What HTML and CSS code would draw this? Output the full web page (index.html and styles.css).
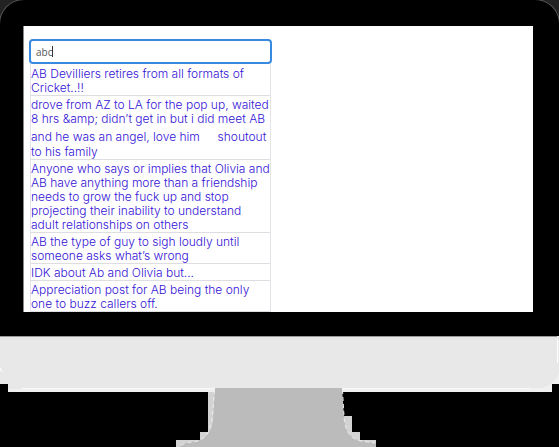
FILE: index.html
```
<!DOCTYPE html>
<html lang="en">
<head>
<meta charset="utf-8">
<title>Search</title>
<link rel="stylesheet" href="styles.css">
</head>
<body>
<div class="monitor">
  <div class="bezel">
    <main class="screen">
      <div class="search">
        <input class="field" type="text" value="abc" aria-label="Search">
        <span class="caret"></span>
      </div>
      <ul class="results">
        <li><a href="#">AB Devilliers retires from all formats of Cricket..!!</a></li>
        <li><a href="#">drove from AZ to LA for the pop up, waited 8 hrs &amp;amp; didn’t get in but i did meet AB and he was an angel, love him <span class="emoji"></span> shoutout to his family</a></li>
        <li><a href="#">Anyone who says or implies that Olivia and AB have anything more than a friendship needs to grow the fuck up and stop projecting their inability to understand adult relationships on others</a></li>
        <li><a href="#">AB the type of guy to sigh loudly until someone asks what’s wrong</a></li>
        <li><a href="#">IDK about Ab and Olivia but...</a></li>
        <li><a href="#">Appreciation post for AB being the only one to buzz callers off.</a></li>
      </ul>
    </main>
  </div>
  <svg class="base" viewBox="0 0 559 111" aria-hidden="true">
    <path fill="#e8e8e8" d="M0 0H559V48H552V56H8V48H0Z"/>
    <path fill="#f0f0f0" d="M552 48H559V38L556 43L550 49L542 52H22V53H8V56H552Z"/>
    <path fill="#fafafa" d="M22 52H215V53H22ZM342 52H530V53H342Z"/>
    <path fill="#999" d="M0 0H557V1H0Z"/>
    <path fill="none" stroke="#fff" d="M557.500 3V27M0 32L2 36"/>
    <path fill="#d3d3d3" d="M208 56H215V111H176V104H200V96H208ZM343 80H352V96H360V104H376V111H343Z"/>
    <path fill="#bbb" d="M215 52H342L344 80Q345 102 361 105L376 107V111H180Q181 107 190 106Q211 105 213 84Z"/>
    <path fill="none" stroke="#eee" stroke-dasharray="4 3" d="M214.500 54L212 84Q209 104 193 106Q182 107 180 111M342.500 54L344 80Q345 102 361 105L375 107"/>
  </svg>
</div>
</body>
</html>
```
FILE: styles.css
```
* {
  box-sizing: border-box;
}

body {
  margin: 0;
  background: #000;
  font-family: Inter, "Liberation Sans", sans-serif;
}

.monitor {
  overflow: hidden;
}

.bezel {
  padding: 26px 26px 24px 23px;
  background: #000;
  border-radius: 24px 24px 0 0;
  box-shadow: 0 0 0 1px #555, 0 0 0 24px #222;
}

.screen {
  padding: 13px 5px 0;
  background: #fff;
  border: solid #888;
  border-width: 0 0 0 1px;
}

.search {
  position: relative;
  width: 50%;
  max-width: 243px;
}

.field {
  display: block;
  width: 100%;
  height: 25px;
  padding: 0 5px;
  border: 2px solid #3889e0;
  border-radius: 4px;
  background: #fff;
  color: #555;
  font: 10px "Open Sans", sans-serif;
  outline: 0;
}

.caret {
  position: absolute;
  left: 23px;
  top: 7px;
  width: 1px;
  height: 11px;
  background: #333;
}

.results {
  width: 50%;
  max-width: 241px;
  margin: 0 0 0 1px;
  padding: 1px 0 0;
  border: solid #e4e4e8;
  border-width: 0 1px;
  list-style: none;
  font-size: 12px;
  font-weight: 300;
  line-height: 14px;
}

.results li {
  padding: 2px 0 0;
  border-bottom: 1px solid #dedee2;
}

.results a {
  color: #3312d6;
  text-decoration: none;
}

.emoji {
  display: inline-block;
  width: 11px;
  height: 19px;
  vertical-align: -4px;
}

.base {
  display: block;
  width: 100%;
}
```
